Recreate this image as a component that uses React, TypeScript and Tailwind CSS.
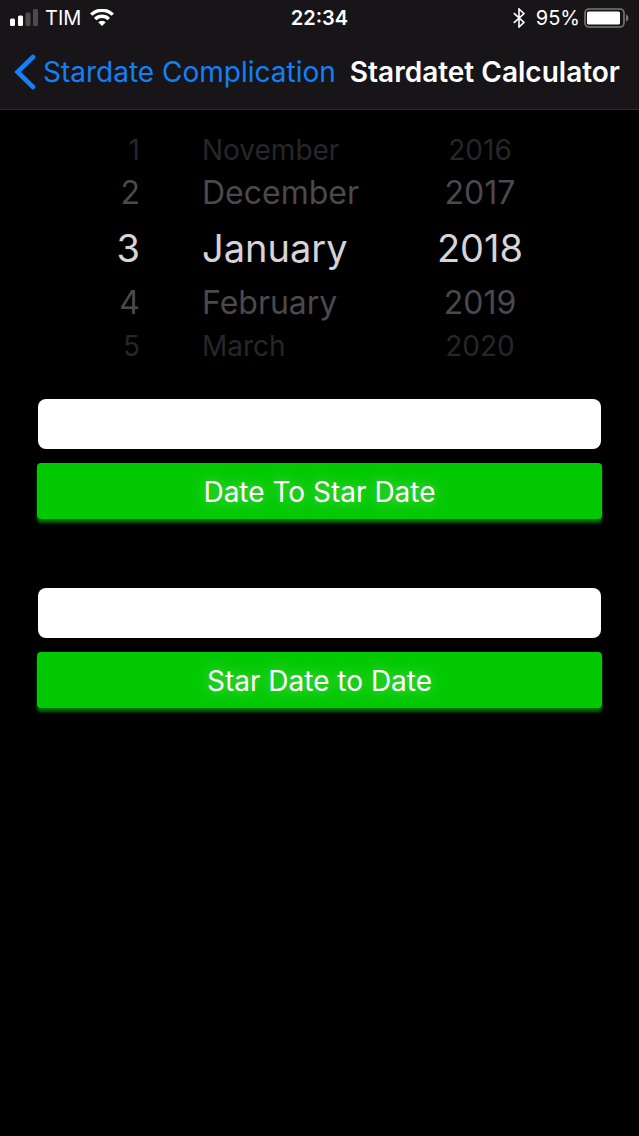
import { useState } from "react";

const DAYS = Array.from({ length: 31 }, (_, i) => String(i + 1));
const MONTHS = [
  "January",
  "February",
  "March",
  "April",
  "May",
  "June",
  "July",
  "August",
  "September",
  "October",
  "November",
  "December",
];
const YEARS = Array.from({ length: 200 }, (_, i) => String(i + 1900));

// rows of a wheel, from the top one to the bottom one
const ROWS = [
  { offset: -2, look: "h-[34px] text-[28px] text-[#272628]" },
  { offset: -1, look: "h-[52px] text-[32px] text-[#4b494c]" },
  { offset: 0, look: "h-[58px] text-[38px] text-[#d6d4d7]" },
  { offset: 1, look: "h-[52px] text-[32px] text-[#4b494c]" },
  { offset: 2, look: "h-[34px] text-[28px] text-[#272628]" },
];

const ALIGN = {
  left: "items-start",
  center: "items-center",
  right: "items-end",
};

type WheelProps = {
  label: string;
  values: string[];
  start: number;
  align: keyof typeof ALIGN;
};

const Wheel: React.FC<WheelProps> = ({ label, values, start, align }) => {
  const [selected, setSelected] = useState(start);
  const at = (offset: number) =>
    (selected + offset + values.length) % values.length;

  return (
    <div
      role="group"
      aria-label={label}
      className={`flex flex-col ${ALIGN[align]}`}
    >
      {ROWS.map(({ offset, look }) => (
        <button
          key={offset}
          type="button"
          aria-pressed={offset === 0}
          onClick={() => setSelected(at(offset))}
          className={`flex items-center leading-none whitespace-nowrap ${look}`}
        >
          {values[at(offset)]}
        </button>
      ))}
    </div>
  );
};

const StatusBar: React.FC = () => (
  <div className="grid grid-cols-3 items-center h-9 px-[10px] text-[20px] leading-6">
    <div className="flex items-center gap-[7px]">
      <svg className="w-7 h-[18px]" viewBox="0 0 28 18" fill="#fff">
        <rect x="0" y="9.5" width="5" height="7.5" rx="1.5" />
        <rect x="8" y="6.5" width="5" height="10.5" rx="1.5" />
        <rect x="15.5" y="3.5" width="5" height="13.5" rx="1.5" fill="#4d4b4e" />
        <rect x="23" y="0" width="5" height="17" rx="1.5" fill="#4d4b4e" />
      </svg>
      <span>TIM</span>
      <svg
        className="w-6 h-[18px] ml-[2px]"
        viewBox="0 0 24 18"
        fill="none"
        stroke="#fff"
        strokeWidth="3.4"
      >
        <path d="M1.2 5.6a15.4 15.4 0 0 1 21.6 0" />
        <path d="M5.2 10.1a9.7 9.7 0 0 1 13.6 0" />
        <path
          d="M12 17l-3.8-3.8a5.4 5.4 0 0 1 7.6 0z"
          fill="#fff"
          stroke="none"
        />
      </svg>
    </div>
    <div className="text-center font-semibold">22:34</div>
    <div className="flex items-center justify-end">
      <svg
        className="w-3 h-5 mr-[11px]"
        viewBox="0 0 12 20"
        fill="none"
        stroke="#fff"
        strokeWidth="1.6"
      >
        <path d="M0.8 5.2l10.2 9.2-5 4.6V1l5 4.6L0.8 14.8" />
      </svg>
      <span>95%</span>
      <svg className="w-[45px] h-5 ml-1" viewBox="0 0 45 20">
        <rect
          x="1"
          y="1"
          width="39"
          height="18"
          rx="4"
          fill="none"
          stroke="#7a787b"
          strokeWidth="1.6"
        />
        <rect x="3" y="3.5" width="33" height="13" rx="1.5" fill="#fff" />
        <path d="M42 6.5c3.2 1 3.2 6 0 7z" fill="#7a787b" />
      </svg>
    </div>
  </div>
);

type ConverterProps = {
  id: string;
  label: string;
};

const Converter: React.FC<ConverterProps> = ({ id, label }) => (
  <form
    className="flex flex-col gap-[14px]"
    onSubmit={(e) => e.preventDefault()}
  >
    <input
      id={id}
      type="text"
      aria-label={label}
      className="h-[50px] mx-px px-3 rounded-lg bg-white text-black text-[28px] outline-none"
    />
    <button
      type="submit"
      className="h-14 pt-px rounded bg-[#03c903] text-[28px] leading-8 shadow-[0_4px_3px_#026a02] [text-shadow:0_0_14px_#ffffff70]"
    >
      {label}
    </button>
  </form>
);

const App: React.FC = () => {
  return (
    <div className="min-h-screen bg-black text-white font-['Inter',sans-serif]">
      <header className="bg-[#171518] border-b border-[#2a282b]">
        <StatusBar />
        <nav className="flex items-center justify-between h-[73px] pb-px pl-[14px] pr-[19px] text-[28px] leading-8 whitespace-nowrap">
          <a href="#" className="flex items-center gap-[7px] text-[#1380f8]">
            <svg
              className="w-[22px] h-9"
              viewBox="0 0 22 36"
              fill="none"
              stroke="currentColor"
              strokeWidth="4.6"
              strokeLinecap="round"
            >
              <path d="M19 3L3.5 18L19 33" />
            </svg>
            Stardate Complication
          </a>
          <h1 className="font-semibold">Stardatet Calculator</h1>
        </nav>
      </header>

      <main className="pt-[23px]">
        <section className="grid grid-cols-[140fr_62fr_213fr_130fr_94fr]">
          <Wheel label="Day" values={DAYS} start={2} align="right" />
          <span />
          <Wheel label="Month" values={MONTHS} start={0} align="left" />
          <Wheel label="Year" values={YEARS} start={118} align="center" />
        </section>

        <section className="flex flex-col gap-[69px] px-[37px] pt-9">
          <Converter id="date" label="Date To Star Date" />
          <Converter id="stardate" label="Star Date to Date" />
        </section>
      </main>
    </div>
  );
};

export default App;
